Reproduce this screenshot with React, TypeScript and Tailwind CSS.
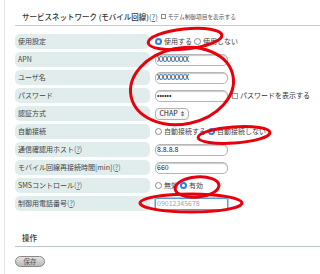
import React from 'react';

type Row = { label: string; help?: boolean; value: React.ReactNode };

function Help() {
  return (
    <span className="text-[#666]">
      {' ('}
      <span className="text-[#2b7bb0] underline">?</span>
      {')'}
    </span>
  );
}

function Radio({ checked }: { checked?: boolean }) {
  return checked ? (
    <span className="flex h-[7px] w-[7px] items-center justify-center rounded-full bg-[#2f80ed]">
      <span className="h-[3px] w-[3px] rounded-full bg-white" />
    </span>
  ) : (
    <span className="h-[7px] w-[7px] rounded-full border border-[#8a8a8a] bg-white" />
  );
}

function RadioGroup({ items }: { items: { text: string; checked?: boolean }[] }) {
  return (
    <div className="flex items-center gap-[2px]">
      {items.map((it) => (
        <label key={it.text} className="flex items-center gap-[2px]">
          <Radio checked={it.checked} />
          <span>{it.text}</span>
        </label>
      ))}
    </div>
  );
}

function TextBox({ value, placeholder, focus }: { value?: string; placeholder?: string; focus?: boolean }) {
  return (
    <div
      className={
        focus
          ? 'flex h-[12px] w-[73px] items-center rounded-[2px] border border-[#5b9bd5] bg-white pl-[1px] text-[#9aa3ad] shadow-[0_0_0_1px_#a9ccef]'
          : 'flex h-[12px] w-[73px] items-center rounded-[5px] border border-[#b5b5b5] bg-white pl-[1px] text-[#222] shadow-[inset_0_1px_1px_#c8c8c8]'
      }
    >
      {value ?? placeholder}
    </div>
  );
}

export default function App() {
  const rows: Row[] = [
    { label: '使用設定', value: <RadioGroup items={[{ text: '使用する', checked: true }, { text: '使用しない' }]} /> },
    { label: 'APN', value: <TextBox value="XXXXXXXX" /> },
    { label: 'ユーザ名', value: <TextBox value="XXXXXXXX" /> },
    {
      label: 'パスワード',
      value: (
        <div className="flex items-center gap-[2px]">
          <TextBox value="••••••" />
          <span className="ml-[2px] h-[6px] w-[6px] border border-[#999] bg-white" />
          <span className="text-[#333]">パスワードを表示する</span>
        </div>
      ),
    },
    {
      label: '認証方式',
      value: (
        <div className="flex h-[12px] w-[34px] items-center justify-center gap-[2px] rounded-[4px] border border-[#b0b0b0] bg-[#f7f7f7] text-[#222]">
          CHAP <span className="text-[6px]">⇕</span>
        </div>
      ),
    },
    { label: '自動接続', value: <RadioGroup items={[{ text: '自動接続する' }, { text: '自動接続しない', checked: true }]} /> },
    { label: '通信確認用ホスト', help: true, value: <TextBox value="8.8.8.8" /> },
    { label: 'モバイル回線再接続時間[min]', help: true, value: <TextBox value="660" /> },
    { label: 'SMSコントロール', help: true, value: <RadioGroup items={[{ text: '無効' }, { text: '有効', checked: true }]} /> },
    { label: '制御用電話番号', help: true, value: <TextBox placeholder="09012345678" focus /> },
  ];

  return (
    <div className="relative h-[274px] w-[320px] overflow-hidden bg-white font-['Noto_Sans_CJK_JP','Noto_Sans',sans-serif] text-[7px] text-[#444]">
      <div className="ml-[4px] h-full border-l border-[#e3e3e3] pl-[10px]">
        <div className="flex items-center border-b border-[#c4d0d0] pb-[3px] pl-[7px] pt-[11px] leading-[11px]">
          <span className="text-[7.5px] font-medium text-[#333]">サービスネットワーク (モバイル回線)</span>
          <span className="text-[7.5px]">
            <Help />
          </span>
          <span className="ml-[3px] mr-[2px] h-[5px] w-[5px] border border-[#888]" />
          <span className="text-[5.7px] text-[#555]">モデム制御項目を表示する</span>
        </div>

        <div className="mt-[8px] flex flex-col gap-[3px]">
          {rows.map((r) => (
            <div key={r.label} className="flex h-[15px] items-center">
              <div className="flex h-full w-[135px] items-center rounded-[5px] bg-[#e1eded] pl-[3px]">
                {r.label}
                {r.help && <Help />}
              </div>
              <div className="ml-[5px] flex items-center">{r.value}</div>
            </div>
          ))}
        </div>

        <div className="mt-[21px] border-b border-[#b8c6c6] pb-[3px] pl-[7px] leading-[11px] text-[7.5px] font-medium text-[#333]">
          操作
        </div>
        <button className="mt-[9px] flex h-[11px] w-[30px] items-center justify-center rounded-full border border-[#888] bg-gradient-to-b from-[#e4e4e4] to-[#b9b9b9] text-[6.5px] text-[#555]">
          保存
        </button>
      </div>

      <svg className="pointer-events-none absolute inset-0" width="320" height="274" viewBox="0 0 320 274" fill="none">
        <g stroke="#e8000b" strokeWidth="3">
          <ellipse cx="185" cy="39" rx="37" ry="10" transform="rotate(-6 185 39)" />
          <ellipse cx="182" cy="86" rx="52" ry="38" transform="rotate(-12 182 86)" />
          <ellipse cx="234" cy="135" rx="36" ry="8" transform="rotate(-4 234 135)" />
          <ellipse cx="197" cy="187" rx="22" ry="10" transform="rotate(-5 197 187)" />
          <ellipse cx="191" cy="203" rx="51" ry="9" />
        </g>
      </svg>
    </div>
  );
}
